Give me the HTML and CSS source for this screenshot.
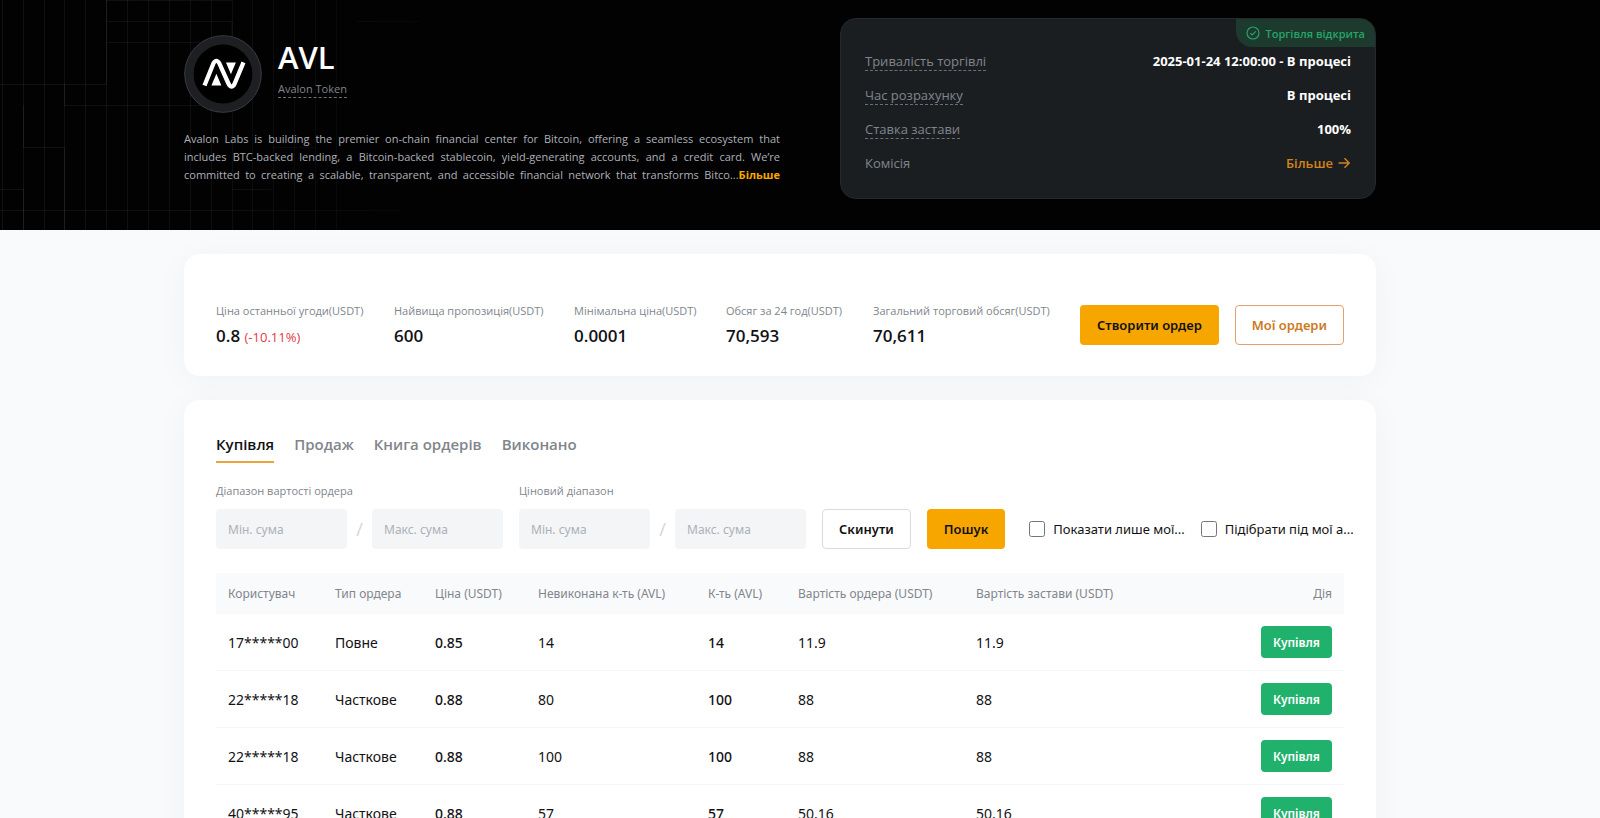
FILE: index.html
```html
<!DOCTYPE html>
<html lang="uk">
<head>
  <meta charset="UTF-8" />
  <meta name="viewport" content="width=device-width, initial-scale=1.0" />
  <title>AVL - Avalon Token</title>
  <link rel="stylesheet" href="styles.css">
</head>
<body>
  <header class="hero">
    <!-- faint circuit grid on the left -->
    <svg class="hero-grid" width="420" height="230" viewBox="0 0 420 230" fill="none" aria-hidden="true">
      <defs>
        <linearGradient id="fade" x1="0" y1="0" x2="420" y2="0" gradientUnits="userSpaceOnUse">
          <stop offset="0" stop-color="#fff" stop-opacity=".06" />
          <stop offset=".5" stop-color="#fff" stop-opacity=".05" />
          <stop offset="1" stop-color="#fff" stop-opacity=".02" />
        </linearGradient>
      </defs>
      <path stroke="url(#fade)" d="M2.500 0V230M23.500 0V230M44.500 0V230M64.500 0V230M85.500 0V230M106.500 0V230M127.500 0V230M148.500 0V230M169.500 0V230M190.500 0V230M211.500 0V230M232.500 0V230M252.500 0V230M273.500 0V230M294.500 0V230M315.500 0V230M336.500 0V230" />
      <path stroke="url(#fade)" d="M106.500 0V84.500H0M106.500 .5H232M106.500 21.500H232V42M106.500 42.500H200M64.500 84V105.500H200M23.500 105V147.500H64.500V230M0 189.500H23.500V230M0 210.500H400M232 189.500H273M273 147.500H315M357 21.500H420" />
    </svg>
    <div class="wrap hero-inner">
      <div class="project">
        <div class="token">
          <svg class="token-logo" width="78" height="78" viewBox="42 44 236 236" fill="none" role="img" aria-label="AVL">
            <circle cx="160" cy="162" r="116" fill="#1e1f23" stroke="#3b3c40" stroke-width="3" />
            <circle cx="160" cy="162" r="89" fill="#000" />
            <path d="M104 197L131 130Q140 115 149 130L177 192Q186 208 195 192L222 127" stroke="#fff" stroke-width="13" />
            <path d="M125 197H155L140 161ZM169 127H199L184 163Z" fill="#fff" />
          </svg>
          <div class="token-title">
            <h1>AVL</h1>
            <span class="token-name hint">Avalon Token</span>
          </div>
        </div>
        <p class="about">
          <span>Avalon Labs is building the premier on-chain financial center for Bitcoin, offering a seamless ecosystem that</span>
          <span>includes BTC-backed lending, a Bitcoin-backed stablecoin, yield-generating accounts, and a credit card. We’re</span>
          <span>committed to creating a scalable, transparent, and accessible financial network that transforms Bitco...<a href="#">Більше</a></span>
        </p>
      </div>

      <div class="info">
        <div class="status">
          <svg width="14" height="14" viewBox="0 0 14 14" fill="none" stroke="currentColor" stroke-width="1.200" aria-hidden="true">
            <circle cx="7" cy="7" r="6" />
            <path d="M4.300 7.200L6.200 9L9.700 5.300" />
          </svg>
          Торгівля відкрита
        </div>
        <dl>
          <div><dt><span class="hint">Тривалість торгівлі</span></dt><dd>2025-01-24 12:00:00 - В процесі</dd></div>
          <div><dt><span class="hint">Час розрахунку</span></dt><dd>В процесі</dd></div>
          <div><dt><span class="hint">Ставка застави</span></dt><dd>100%</dd></div>
          <div>
            <dt>Комісія</dt>
            <dd>
              <a href="#" class="more">Більше
                <svg width="14" height="14" viewBox="0 0 14 14" fill="none" stroke="currentColor" stroke-width="1.400" aria-hidden="true">
                  <path d="M1.500 7H12M7.500 2.200L12.200 7L7.500 11.800" />
                </svg>
              </a>
            </dd>
          </div>
        </dl>
      </div>
    </div>
  </header>

  <main class="wrap">
    <section class="card summary">
      <dl class="stats">
        <div><dt>Ціна останньої угоди(USDT)</dt><dd>0.8 <small>(-10.11%)</small></dd></div>
        <div><dt>Найвища пропозиція(USDT)</dt><dd>600</dd></div>
        <div><dt>Мінімальна ціна(USDT)</dt><dd>0.0001</dd></div>
        <div><dt>Обсяг за 24 год(USDT)</dt><dd>70,593</dd></div>
        <div><dt>Загальний торговий обсяг(USDT)</dt><dd>70,611</dd></div>
      </dl>
      <button type="button" class="btn btn-primary">Створити ордер</button>
      <button type="button" class="btn btn-outline">Мої ордери</button>
    </section>

    <section class="card orders">
      <nav class="tabs">
        <a href="#" class="tab active">Купівля</a>
        <a href="#" class="tab">Продаж</a>
        <a href="#" class="tab">Книга ордерів</a>
        <a href="#" class="tab">Виконано</a>
      </nav>

      <form class="filters">
        <fieldset>
          <legend>Діапазон вартості ордера</legend>
          <div class="range">
            <input type="text" placeholder="Мін. сума" aria-label="Мін. сума">
            <span>/</span>
            <input type="text" placeholder="Макс. сума" aria-label="Макс. сума">
          </div>
        </fieldset>
        <fieldset>
          <legend>Ціновий діапазон</legend>
          <div class="range">
            <input type="text" placeholder="Мін. сума" aria-label="Мін. сума">
            <span>/</span>
            <input type="text" placeholder="Макс. сума" aria-label="Макс. сума">
          </div>
        </fieldset>
        <button type="button" class="btn btn-plain">Скинути</button>
        <button type="button" class="btn btn-primary">Пошук</button>
        <div class="checks">
          <label><input type="checkbox">Показати лише мої...</label>
          <label><input type="checkbox">Підібрати під мої а...</label>
        </div>
      </form>

      <table>
        <colgroup>
          <col class="c-user"><col class="c-type"><col class="c-price"><col class="c-open"><col class="c-amount"><col class="c-value"><col>
          <col class="c-action">
        </colgroup>
        <thead>
          <tr>
            <th>Користувач</th>
            <th>Тип ордера</th>
            <th>Ціна (USDT)</th>
            <th>Невиконана к-ть (AVL)</th>
            <th>К-ть (AVL)</th>
            <th>Вартість ордера (USDT)</th>
            <th>Вартість застави (USDT)</th>
            <th class="action">Дія</th>
          </tr>
        </thead>
        <tbody>
          <tr>
            <td>17*****00</td><td>Повне</td><td class="strong">0.85</td><td>14</td><td class="strong">14</td><td>11.9</td><td>11.9</td>
            <td class="action"><button type="button" class="btn-buy">Купівля</button></td>
          </tr>
          <tr>
            <td>22*****18</td><td>Часткове</td><td class="strong">0.88</td><td>80</td><td class="strong">100</td><td>88</td><td>88</td>
            <td class="action"><button type="button" class="btn-buy">Купівля</button></td>
          </tr>
          <tr>
            <td>22*****18</td><td>Часткове</td><td class="strong">0.88</td><td>100</td><td class="strong">100</td><td>88</td><td>88</td>
            <td class="action"><button type="button" class="btn-buy">Купівля</button></td>
          </tr>
          <tr>
            <td>40*****95</td><td>Часткове</td><td class="strong">0.88</td><td>57</td><td class="strong">57</td><td>50.16</td><td>50.16</td>
            <td class="action"><button type="button" class="btn-buy">Купівля</button></td>
          </tr>
        </tbody>
      </table>
    </section>
  </main>
</body>
</html>
```

FILE: styles.css
```css
:root {
  --orange: #f7a600;
  --orange-dark: #cd7a1f;
  --green: #20b26c;
  --red: #df3a47;
  --text: #121214;
  --muted: #81858c;
  --field: #f3f5f7;
}

* {
  box-sizing: border-box;
}

body {
  margin: 0;
  background-color: #f9fafc;
  color: var(--text);
  font-family: "Open Sans", "Noto Sans", sans-serif;
  font-size: 13px;
  overflow: hidden;
  height: 100vh;
}

a {
  text-decoration: none;
}

dl, dd, p, h1 {
  margin: 0;
}

.wrap {
  width: calc(100% - 64px);
  max-width: 1232px;
  margin: 0 auto;
  padding-right: 40px;
}

.hero {
  position: relative;
  background-color: #020202;
  height: 230px;
}

.hero-grid {
  position: absolute;
  left: 0;
  top: 0;
}

.hero-inner {
  position: relative;
  display: grid;
  grid-template-columns: minmax(0, 596fr) minmax(0, 536fr);
  gap: 60px;
  padding-top: 18px;
}

.token {
  display: flex;
  gap: 16px;
  padding-top: 17px;
}

.token-title {
  display: flex;
  flex-direction: column;
  align-items: flex-start;
  gap: 4px;
  padding-top: 2px;
}

.token h1 {
  color: #fff;
  font-size: 31px;
  line-height: 40px;
  font-weight: 600;
}

.hint {
  border-bottom: 1px dashed #6b6f76;
}

.token-name {
  color: var(--muted);
  font-size: 11px;
  line-height: 16px;
}

.about {
  margin-top: 17px;
  color: #adb1b8;
  font-size: 11px;
  line-height: 18px;
}

.about span {
  display: block;
  white-space: nowrap;
  text-align: justify;
  text-align-last: justify;
}

.about a {
  color: var(--orange);
  font-weight: 700;
}

.info {
  position: relative;
  height: 181px;
  padding: 33px 24px 28px;
  border: 1px solid #25282c;
  border-radius: 16px;
  background-color: #1b1e21;
  overflow: hidden;
}

.status {
  position: absolute;
  top: 0;
  right: 0;
  display: flex;
  align-items: center;
  gap: 6px;
  height: 28px;
  padding: 0 10px;
  border-bottom-left-radius: 16px;
  background-color: #1c3a2e;
  color: #27a468;
  font-size: 11px;
  font-weight: 600;
}

.info dl > div {
  display: flex;
  justify-content: space-between;
  line-height: 18px;
  margin-bottom: 16px;
}

.info dt {
  color: var(--muted);
}

.info dd {
  color: #fff;
  font-weight: 700;
}

.more {
  display: flex;
  align-items: center;
  gap: 4px;
  color: #d3831a;
  font-weight: 600;
}

.card {
  margin-top: 24px;
  padding: 32px;
  border-radius: 16px;
  background-color: #fff;
  box-shadow: 0 4px 32px rgba(18, 18, 20, 0.04);
}

.summary {
  display: flex;
  align-items: center;
  gap: 16px;
  padding-top: 48px;
  padding-bottom: 28px;
}

.stats {
  flex: 1;
  display: grid;
  grid-template-columns: 178fr 180fr 152fr 147fr 191fr;
}

.stats dt {
  color: var(--muted);
  font-size: 11px;
  line-height: 18px;
  white-space: nowrap;
}

.stats dd {
  margin-top: 4px;
  font-size: 17px;
  font-weight: 600;
  line-height: 24px;
}

.stats small {
  color: var(--red);
  font-size: 13px;
  font-weight: 400;
  line-height: 16px;
}

.btn {
  height: 40px;
  padding: 0 16px;
  border: 1px solid transparent;
  border-radius: 4px;
  font-family: "Noto Sans", sans-serif;
  font-size: 13px;
  font-weight: 600;
  color: var(--text);
  cursor: pointer;
  white-space: nowrap;
}

.btn-primary {
  background-color: var(--orange);
}

.btn-outline {
  background-color: #fff;
  border-color: #e6a070;
  color: var(--orange-dark);
}

.btn-plain {
  background-color: #fff;
  border-color: #d9dce0;
}

.tabs {
  display: flex;
  gap: 20px;
}

.tab {
  padding-bottom: 5px;
  border-bottom: 2px solid transparent;
  color: var(--muted);
  font-size: 15px;
  font-weight: 600;
  line-height: 24px;
}

.tab.active {
  color: var(--text);
  border-bottom-color: #eba43a;
}

.filters {
  display: flex;
  align-items: flex-end;
  gap: 16px;
  margin-top: 18px;
}

fieldset {
  flex-shrink: 0;
  margin: 0;
  padding: 0;
  border: 0;
}

legend {
  padding: 0;
  margin-bottom: 8px;
  color: var(--muted);
  font-size: 11px;
  line-height: 20px;
}

.range {
  display: grid;
  grid-template-columns: 131px 25px 131px;
  align-items: center;
  text-align: center;
  color: #d3d6da;
  font-size: 18px;
}

.range input {
  width: 100%;
  height: 40px;
  padding: 0 12px;
  border: 0;
  border-radius: 4px;
  background-color: var(--field);
  font: 12px "Noto Sans", sans-serif;
}

.range input::placeholder {
  color: #adb1b8;
}

.checks {
  display: flex;
  gap: 16px;
  height: 40px;
  margin-left: 8px;
  white-space: nowrap;
}

.checks label {
  display: flex;
  align-items: center;
  gap: 8px;
  font-family: "Noto Sans", sans-serif;
}

.checks input {
  width: 16px;
  height: 16px;
  margin: 0;
}

table {
  width: 100%;
  margin-top: 24px;
  border-collapse: separate;
  border-spacing: 0;
  table-layout: fixed;
  font-family: "Noto Sans", sans-serif;
  font-size: 14px;
}

.c-user { width: 107px; }
.c-type { width: 100px; }
.c-price { width: 103px; }
.c-open { width: 170px; }
.c-amount { width: 90px; }
.c-value { width: 178px; }
.c-action { width: 100px; }

th, td {
  padding: 0 0 0 12px;
  text-align: left;
  white-space: nowrap;
}

th {
  height: 41px;
  background-color: #f9fafc;
  color: var(--muted);
  font-size: 12px;
  font-weight: 400;
}

td {
  height: 57px;
  border-bottom: 1px solid #f3f5f7;
}

.strong {
  font-weight: 500;
}

.action {
  padding-right: 12px;
  text-align: right;
}

.btn-buy {
  height: 32px;
  padding: 0 12px;
  border: 0;
  border-radius: 4px;
  background-color: var(--green);
  color: #fff;
  font: 600 12px "Noto Sans", sans-serif;
  cursor: pointer;
}
```
